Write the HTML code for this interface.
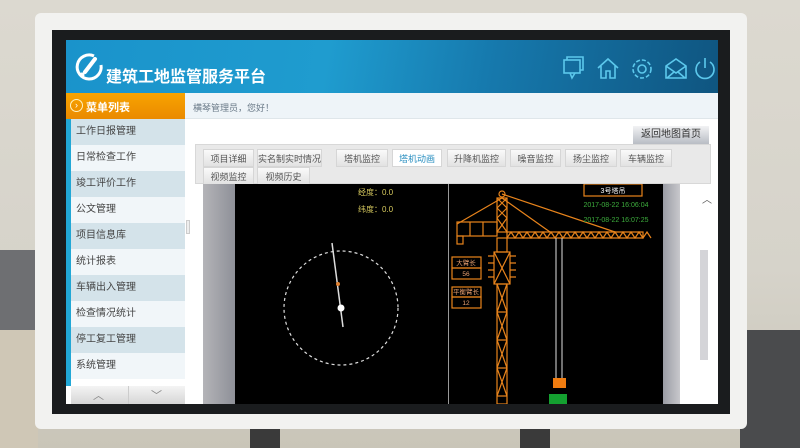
<!DOCTYPE html>
<html><head><meta charset="utf-8"><style>
*{margin:0;padding:0;box-sizing:border-box}
body{width:800px;height:448px;overflow:hidden;position:relative;background:linear-gradient(180deg,#dcd9d0 0%,#d6d3ca 60%,#c9c5b8 100%);font-family:"Liberation Sans","Noto Sans CJK SC",sans-serif}
.a{position:absolute}
.menu div{height:26px;line-height:26px;padding-left:5px;font-size:10px;color:#444}
.tab{position:absolute;height:18px;line-height:18px;font-size:9px;color:#555;text-align:center;background:linear-gradient(#fafafa,#e2e2e2);border:1px solid #d6d6d6}
</style></head><body>
<div class="a" style="left:0;top:250px;width:38px;height:80px;background:#6e6f72"></div>
<div class="a" style="left:0;top:330px;width:38px;height:118px;background:#cfc7b6"></div>
<div class="a" style="left:740px;top:330px;width:60px;height:118px;background:#4a4b4d"></div>
<div class="a" style="left:250px;top:425px;width:30px;height:23px;background:#3a3a3a"></div>
<div class="a" style="left:520px;top:425px;width:30px;height:23px;background:#3a3a3a"></div>
<!-- bezel -->
<div class="a" style="left:35px;top:13px;width:712px;height:416px;background:#f2f2f0;border-radius:6px"></div>
<div class="a" style="left:52px;top:30px;width:678px;height:384px;background:#1a1c1e"></div>
<!-- screen -->
<div class="a" style="left:66px;top:40px;width:652px;height:364px;background:#fff;overflow:hidden">
 <div class="a" style="left:0;top:0;width:652px;height:53px;background:linear-gradient(100deg,#1a93cb 0%,#1f9ccf 40%,#1679ad 65%,#0f5580 100%)"></div>
 <svg class="a" style="left:8px;top:12px" width="30" height="30" viewBox="0 0 30 30"><path d="M20 4A12 12 0 1 0 27 13" fill="none" stroke="#fff" stroke-width="3"/><path d="M21 7L11 20" stroke="#fff" stroke-width="4" stroke-linecap="round"/><circle cx="8" cy="23" r="2.5" fill="#fff"/></svg>
 <div class="a" style="left:40px;top:23px;color:#fff;font-size:16px;font-weight:bold">建筑工地监管服务平台</div>
 <svg class="a" style="left:496px;top:16px" width="156" height="26" viewBox="0 0 156 26" fill="none" stroke="#5cc8ec" stroke-width="1.6">
  <rect x="2" y="4" width="16" height="13"/><path d="M5 4V1h16v13h-3M8 17l2 5 3-5"/>
  <path d="M36 12l10-9 10 9M39 10v12h5v-7h4v7h5V10"/>
  <circle cx="80" cy="13" r="4"/><circle cx="80" cy="13" r="9" stroke-dasharray="4 2"/>
  <path d="M104 10l10-7 10 7v12h-20zM104 10l10 7 10-7M105 22l7-6M123 22l-7-6"/>
  <path d="M138 6a9 9 0 1 0 10 0M143 2v10"/>
 </svg>
 <!-- sidebar -->
 <div class="a" style="left:0;top:53px;width:119px;height:26px;background:linear-gradient(#f8a400,#ea8a00)"></div>
 <div class="a" style="left:4px;top:59px;width:13px;height:13px;border:1.5px solid #fff3c0;border-radius:50%;color:#fff;font-size:9px;line-height:10px;text-align:center">›</div>
 <div class="a" style="left:20px;top:59px;color:#fff;font-size:11px;font-weight:bold">菜单列表</div>
 <div class="a" style="left:0;top:79px;width:5px;height:267px;background:#21a7d6"></div>
 <div class="a menu" style="left:5px;top:79px;width:114px">
  <div style="background:#d4e3ea">工作日报管理</div><div style="background:#f1f6f9">日常检查工作</div><div style="background:#d4e3ea">竣工评价工作</div><div style="background:#f1f6f9">公文管理</div><div style="background:#d4e3ea">项目信息库</div><div style="background:#f1f6f9">统计报表</div><div style="background:#d4e3ea">车辆出入管理</div><div style="background:#f1f6f9">检查情况统计</div><div style="background:#d4e3ea">停工复工管理</div><div style="background:#f1f6f9">系统管理</div>
 </div>
 <div class="a" style="left:5px;top:346px;width:114px;height:18px;background:linear-gradient(#f4f4f4,#d6d6d6);color:#888;font-size:11px"><span class="a" style="left:22px;top:1px">︿</span><span class="a" style="left:57px;top:0;width:1px;height:18px;background:#ccc"></span><span class="a" style="left:80px;top:1px">﹀</span></div>
 <div class="a" style="left:120px;top:180px;width:4px;height:14px;background:#eee;border:1px solid #ccc"></div>
 <!-- main -->
 <div class="a" style="left:119px;top:53px;width:533px;height:26px;background:#eef4f8;border-bottom:1px solid #dfe6ea"></div>
 <div class="a" style="left:127px;top:61px;color:#6a7a88;font-size:9px">横琴管理员，您好！</div>
 <div class="a" style="left:567px;top:86px;width:76px;height:18px;background:linear-gradient(#f2f2f4,#b8bcc4);color:#333;font-size:10px;line-height:18px;text-align:center">返回地图首页</div>
 <div class="a" style="left:129px;top:104px;width:516px;height:40px;background:#e9e9e9;border:1px solid #d8d8d8"></div>
 <div class="tab" style="left:137px;top:109px;width:51px">项目详细</div>
 <div class="tab" style="left:191px;top:109px;width:65px">实名制实时情况</div>
 <div class="tab" style="left:270px;top:109px;width:52px">塔机监控</div>
 <div class="tab" style="left:326px;top:109px;width:50px;background:#fff;color:#2a8fc0">塔机动画</div>
 <div class="tab" style="left:381px;top:109px;width:59px">升降机监控</div>
 <div class="tab" style="left:444px;top:109px;width:51px">噪音监控</div>
 <div class="tab" style="left:499px;top:109px;width:52px">扬尘监控</div>
 <div class="tab" style="left:554px;top:109px;width:52px">车辆监控</div>
 <div class="tab" style="left:137px;top:127px;width:51px">视频监控</div>
 <div class="tab" style="left:191px;top:127px;width:53px">视频历史</div>
 <!-- content -->
 <div class="a" style="left:137px;top:144px;width:32px;height:220px;background:linear-gradient(90deg,#b4b4b8,#8e9098)"></div>
 <div class="a" style="left:169px;top:144px;width:428px;height:220px;background:#000"></div>
 <div class="a" style="left:382px;top:144px;width:1px;height:220px;background:#999"></div>
 <div class="a" style="left:597px;top:144px;width:17px;height:220px;background:linear-gradient(90deg,#9a9ca4,#c8c8cc)"></div>
 <div class="a" style="left:614px;top:144px;width:31px;height:220px;background:#fff"></div>
 <div class="a" style="left:634px;top:210px;width:8px;height:110px;background:#d4d4d8"></div>
 <div class="a" style="left:636px;top:151px;color:#555;font-size:10px">︿</div>
 <div class="a" style="left:292px;top:147px;color:#d6c95e;font-size:8px">经度：0.0</div>
 <div class="a" style="left:292px;top:164px;color:#d6c95e;font-size:8px">纬度：0.0</div>
 <svg class="a" style="left:169px;top:144px" width="428" height="220">
  <circle cx="106" cy="124" r="57" fill="none" stroke="#ddd" stroke-width="1.2" stroke-dasharray="3 3"/>
  <line x1="97" y1="59" x2="108" y2="143" stroke="#ddd" stroke-width="1.5"/>
  <circle cx="103" cy="100" r="2" fill="#e08030"/>
  <circle cx="106" cy="124" r="3.5" fill="#fff"/>
  <g stroke="#e8841c" stroke-width="1.2" fill="none">
   <circle cx="267" cy="10" r="3"/>
   <rect x="262" y="14" width="10" height="34"/><path d="M262 14l10 10M272 14l-10 10M262 24l10 10M272 24l-10 10M262 34l10 14M272 34l-10 14"/>
   <path d="M267 10L380 48M267 14L315 48M267 14L222 40"/>
   <path d="M272 48h136v6H272zM272 54l4-6 4 6 4-6 4 6 4-6 4 6 4-6 4 6 4-6 4 6 4-6 4 6 4-6 4 6 4-6 4 6 4-6 4 6 4-6 4 6 4-6 4 6 4-6 4 6 4-6 4 6 4-6 4 6 4-6 4 6 4-6 4 6 4-6 4 6 4-6 4 6"/>
   <rect x="222" y="38" width="40" height="14"/><path d="M235 38v14M248 38v14"/><rect x="222" y="52" width="6" height="8"/>
   <rect x="259" y="68" width="16" height="32"/><path d="M253 72h6M253 79h6M253 86h6M253 93h6M275 72h6M275 79h6M275 86h6M275 93h6M259 68l16 32M275 68l-16 32"/>
   <rect x="262" y="54" width="10" height="14"/>
   <rect x="262" y="100" width="10" height="120"/>
   <path d="M262 100l10 28M272 100l-10 28M262 128l10 28M272 128l-10 28M262 156l10 28M272 156l-10 28M262 184l10 28M272 184l-10 28M262 128h10M262 156h10M262 184h10M262 212h10"/>
   <rect x="349" y="0" width="58" height="12"/>
   <rect x="217" y="73" width="29" height="11"/><rect x="217" y="84" width="29" height="11"/>
   <rect x="217" y="103" width="29" height="10"/><rect x="217" y="113" width="29" height="11"/>
  </g>
  <line x1="321" y1="54" x2="321" y2="194" stroke="#bbb" stroke-width="1.2"/><line x1="327" y1="54" x2="327" y2="194" stroke="#bbb" stroke-width="1.2"/>
  <rect x="318" y="194" width="13" height="10" fill="#f07c10"/>
  <rect x="314" y="210" width="18" height="10" fill="#14a030"/>
  <text x="378" y="9" fill="#fff" font-size="7" text-anchor="middle" font-family="Liberation Sans,Noto Sans CJK SC,sans-serif">3号塔吊</text>
  <text x="381" y="23" fill="#3dad3d" font-size="7" text-anchor="middle" font-family="Liberation Sans,sans-serif">2017-08-22 16:06:04</text>
  <text x="381" y="38" fill="#3dad3d" font-size="7" text-anchor="middle" font-family="Liberation Sans,sans-serif">2017-08-22 16:07:25</text>
  <g fill="#e8a070" font-size="6.5" text-anchor="middle" font-family="Liberation Sans,Noto Sans CJK SC,sans-serif">
   <text x="231" y="81">大臂长</text><text x="231" y="92">56</text><text x="231" y="110">平衡臂长</text><text x="231" y="121">12</text>
  </g>
 </svg>
</div>
</body></html>
